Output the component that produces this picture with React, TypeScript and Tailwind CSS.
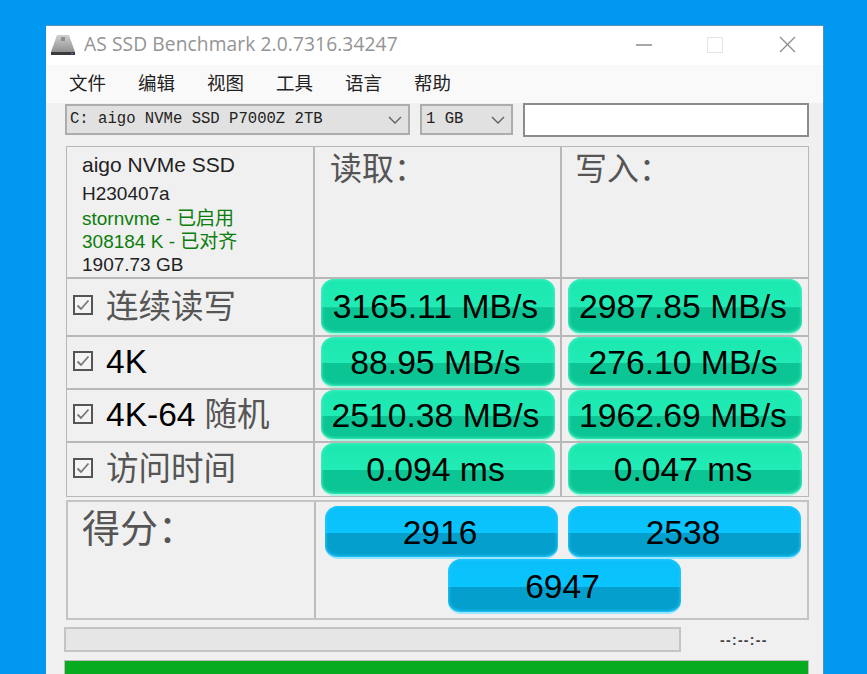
import React from 'react';

const cjk = 'font-[Noto_Sans_CJK_SC,sans-serif]';
const sans = 'font-[Liberation_Sans,Noto_Sans_CJK_SC,sans-serif]';

const Chevron: React.FC = () => (
  <svg width="14" height="8" viewBox="0 0 14 8" fill="none" stroke="#606060" strokeWidth="1.4">
    <path d="M1 1l6 6 6-6" />
  </svg>
);

const CheckBox: React.FC = () => (
  <span className="w-[20px] h-[20px] shrink-0 border-2 border-[#555] bg-[#f4f4f4] flex items-center justify-center">
    <svg width="14" height="14" viewBox="0 0 14 14" fill="none" stroke="#777" strokeWidth="1.8">
      <path d="M1.5 7.5l3.5 3.5 7.5-8.5" />
    </svg>
  </span>
);

const ResultBar: React.FC<{ value: string }> = ({ value }) => (
  <div className="w-[234px] h-full rounded-[13px] pt-[1px] border-b-[2px] border-[#a5f7df] shadow-[inset_0_0_3px_1px_#3ff0c2] bg-[linear-gradient(#1ae8af_0%,#22ebb5_52%,#0cc594_53%,#0cc594_100%)] flex items-center justify-center pr-[4px] text-[33.7px] text-black">
    {value}
  </div>
);

const ScoreBar: React.FC<{ value: string }> = ({ value }) => (
  <div className="w-[233px] h-full rounded-[13px] pt-[4px] pr-[3px] border-b-[2px] border-[#9be6ff] shadow-[inset_0_0_3px_1px_#24c9ff] bg-[linear-gradient(#0abffa_0%,#0ac5fd_52%,#049fcd_53%,#049fcd_100%)] flex items-center justify-center text-[33.5px] text-black">
    {value}
  </div>
);

const rows = [
  { label: '连续读写', latin: '', read: '3165.11 MB/s', write: '2987.85 MB/s', h: 'h-[58px]' },
  { label: '', latin: '4K', read: '88.95 MB/s', write: '276.10 MB/s', h: 'h-[53px]' },
  { label: '随机', latin: '4K-64', read: '2510.38 MB/s', write: '1962.69 MB/s', h: 'h-[53px]' },
  { label: '访问时间', latin: '', read: '0.094 ms', write: '0.047 ms', h: 'h-[55px]' },
];

const menus = ['文件', '编辑', '视图', '工具', '语言', '帮助'];

const App: React.FC = () => {
  return (
    <div className={`h-[674px] overflow-hidden bg-[#0098f0] pt-[25px] pl-[46px] ${sans}`}>
      <div className="w-[778px] h-[649px] bg-[#f0f0f0] border-t border-r border-[#5a8fb5]">
        {/* title bar */}
        <div className="h-[39px] bg-white flex items-center pl-[5px] pb-[2px]">
          <svg width="24" height="22" viewBox="0 0 24 22" className="mr-[9px]">
            <defs>
              <linearGradient id="hdd" x1="0" y1="0" x2="0" y2="1">
                <stop offset="0" stopColor="#d0d0d0" />
                <stop offset="1" stopColor="#909090" />
              </linearGradient>
            </defs>
            <path d="M6 1h12l6 17H0z" fill="url(#hdd)" />
            <path d="M0 18h24v3H0z" fill="#3a3a3a" />
            <path d="M20 19h2v1h-2z" fill="#5a6ae0" />
            <path d="M10 3h4v4h-4z" fill="#8e8e8e" />
          </svg>
          <span className="font-[Open_Sans,sans-serif] text-[19.2px] text-[#949494] tracking-[0.1px]">
            AS SSD Benchmark 2.0.7316.34247
          </span>
          <div className="ml-auto flex items-center">
            <div className="w-[16px] h-[2px] bg-[#a8a8a8] mr-[55px]" />
            <div className="w-[16px] h-[16px] border border-[#e4e4e4] mr-[56px]" />
            <svg width="17" height="17" viewBox="0 0 17 17" stroke="#8c8c8c" strokeWidth="1.3" className="mr-[27px]">
              <path d="M1 1l15 15M16 1L1 16" />
            </svg>
          </div>
        </div>

        {/* menu */}
        <div className={`h-[38px] bg-[#f9f9f9] flex items-center pl-[23px] pb-[2px] gap-[32px] text-[18.5px] text-[#222] ${cjk}`}>
          {menus.map((m) => (
            <span key={m}>{m}</span>
          ))}
        </div>

        {/* selectors */}
        <div className="h-[43px] flex items-start pt-[1px] pl-[19px] gap-[10px] font-[Liberation_Mono,monospace] text-[15.6px] text-[#222]">
          <div className="w-[345px] h-[31px] bg-[#e1e1e1] border-2 border-[#adadad] flex items-center justify-between pl-[3px] pr-[6px]">
            <span className="pt-[1px]">C: aigo NVMe SSD P7000Z 2TB</span>
            <Chevron />
          </div>
          <div className="w-[93px] h-[31px] bg-[#e1e1e1] border-2 border-[#adadad] flex items-center justify-between pl-[4px] pr-[6px]">
            <span className="pt-[1px]">1 GB</span>
            <Chevron />
          </div>
          <div className="w-[286px] h-[34px] -mt-[1px] bg-white border-2 border-[#8c8c8c]" />
        </div>

        {/* results table */}
        <div className="ml-[20px] w-[743px]">
          <div className="flex h-[132px]">
            <div className="w-[248px] border border-[#b8b8b8] pl-[15px] pt-[2px] text-[#222] text-[19px]">
              <div className="text-[21px] leading-[32px]">aigo NVMe SSD</div>
              <div className="leading-[26px]">H230407a</div>
              <div className="text-[#0b7d0b] leading-[23px]">stornvme - 已启用</div>
              <div className="text-[#0b7d0b] leading-[24px]">308184 K - 已对齐</div>
              <div className="leading-[22px]">1907.73 GB</div>
            </div>
            <div className={`w-[247px] border border-[#b8b8b8] pl-[15px] text-[32px] leading-[38px] text-[#555] ${cjk}`}>读取：</div>
            <div className={`w-[248px] border border-[#b8b8b8] pl-[13px] text-[32px] leading-[38px] text-[#555] ${cjk}`}>写入：</div>
          </div>

          {rows.map((r) => (
            <div key={r.read} className={`flex ${r.h}`}>
              <div className="w-[248px] border border-[#b8b8b8] flex items-center pl-[6px] pb-[4px] gap-[13px]">
                <CheckBox />
                <span className="pt-[4px] text-[32.5px] whitespace-nowrap text-[#555]">
                  {r.latin && <span className="text-[33.5px] text-black">{r.latin}</span>}
                  {r.latin && r.label ? ' ' : ''}
                  {r.label}
                </span>
              </div>
              <div className="w-[247px] border border-[#b8b8b8] flex items-center justify-center">
                <ResultBar value={r.read} />
              </div>
              <div className="w-[248px] border border-[#b8b8b8] flex items-center justify-center">
                <ResultBar value={r.write} />
              </div>
            </div>
          ))}

          {/* score */}
          <div className="flex h-[120px] mt-[3px] border-2 border-[#c4c4c4]">
            <div className={`w-[248px] border-r-2 border-[#bcbcbc] pl-[14px] text-[38px] leading-[48px] text-[#555] ${cjk}`}>得分：</div>
            <div className="flex-1 pl-[9px] pt-[4px]">
              <div className="flex gap-[10px] h-[53px]">
                <ScoreBar value="2916" />
                <ScoreBar value="2538" />
              </div>
              <div className="flex justify-center pr-[4px] h-[55px]">
                <ScoreBar value="6947" />
              </div>
            </div>
          </div>
        </div>

        {/* progress */}
        <div className="flex items-center pl-[18px] mt-[6px] h-[26px]">
          <div className="w-[617px] h-[25px] bg-[#e6e6e6] border-2 border-[#c4c4c4]" />
          <span className="ml-[39px] pt-[3px] text-[14px] font-bold text-[#444] tracking-[1.3px]">--:--:--</span>
        </div>
        <div className="ml-[18px] mt-[8px] w-[745px] h-[30px] bg-[#06ab20] border border-[#bdbdbd]" />
      </div>
    </div>
  );
};

export default App;
